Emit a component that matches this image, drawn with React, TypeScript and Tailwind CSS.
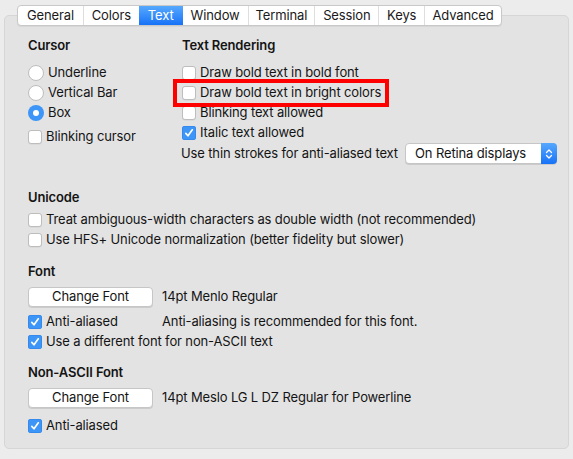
import React from 'react';

const tabs = ['General', 'Colors', 'Text', 'Window', 'Terminal', 'Session', 'Keys', 'Advanced'];
const tabWidths: Record<string, string> = {
  General: 'w-[65px]',
  Colors: 'w-[56px]',
  Text: 'w-[44px]',
  Window: 'w-[65px]',
  Terminal: 'w-[67px]',
  Session: 'w-[64px]',
  Keys: 'w-[46px]',
  Advanced: 'w-[77px]',
};

const Checkbox = ({ checked = false }: { checked?: boolean }) =>
  checked ? (
    <span className="flex h-[14px] w-[14px] shrink-0 items-center justify-center rounded-[3px] bg-[#3d95f8] shadow-[inset_0_0_0_0.5px_#2d7fe0]">
      <svg width="10" height="10" viewBox="0 0 10 10">
        <path d="M1.8 5.4 L4 7.8 L8.3 1.8" fill="none" stroke="white" strokeWidth="1.7" strokeLinecap="round" strokeLinejoin="round" />
      </svg>
    </span>
  ) : (
    <span className="h-[14px] w-[14px] shrink-0 rounded-[3px] border border-[#bdbdbd] bg-white shadow-[0_0.5px_0.5px_rgba(0,0,0,0.08)]" />
  );

const Radio = ({ checked = false }: { checked?: boolean }) =>
  checked ? (
    <span className="flex h-[16px] w-[16px] shrink-0 items-center justify-center rounded-full bg-[#3d95f8]">
      <span className="h-[6px] w-[6px] rounded-full bg-white" />
    </span>
  ) : (
    <span className="h-[16px] w-[16px] shrink-0 rounded-full border border-[#bdbdbd] bg-white" />
  );

const CheckRow = ({ label, checked }: { label: string; checked?: boolean }) => (
  <div className="flex h-[20px] items-center gap-[4px]">
    <Checkbox checked={checked} />
    <span>{label}</span>
  </div>
);

const Heading = ({ children, className = '' }: { children: React.ReactNode; className?: string }) => (
  <div className={`h-[17px] leading-[17px] font-semibold ${className}`}>{children}</div>
);

const Button = ({ label }: { label: string }) => (
  <div className="flex h-[20px] w-[125px] shrink-0 items-center justify-center rounded-[4px] border border-[#c6c6c6] bg-white shadow-[0_1px_0.5px_rgba(0,0,0,0.1)]">
    {label}
  </div>
);

export default function App() {
  return (
    <div
      className="h-[459px] w-[573px] overflow-hidden bg-[#ececec] pt-[5px] text-[13px] tracking-[-0.13px] text-[#141414]"
      style={{ fontFamily: 'Inter, "Liberation Sans", sans-serif' }}
    >
      {/* tab strip sits over the panel's top edge */}
      <div className="relative z-10 ml-[17px] flex h-[21px] w-[485px] overflow-hidden rounded-[4px] border border-[#c8c8c8] bg-white shadow-[0_1px_1px_rgba(0,0,0,0.06)]">
        {tabs.map((t, i) => (
          <div
            key={t}
            className={`flex h-full items-center justify-center ${tabWidths[t]} ${
              t === 'Text'
                ? 'bg-gradient-to-b from-[#56a8fd] to-[#1572f7] text-white'
                : 'text-[#1a1a1a]'
            } ${i > 0 && t !== 'Text' && tabs[i - 1] !== 'Text' ? 'border-l border-[#dedede]' : ''}`}
          >
            {t}
          </div>
        ))}
      </div>

      <div className="mx-[4px] mt-[-11px] h-[434px] rounded-[5px] border border-[#d6d6d6] bg-[#e3e3e3] pl-[23px] pt-[21px]">
        <div className="flex">
          {/* Cursor */}
          <div className="w-[154px]">
            <Heading>Cursor</Heading>
            <div className="mt-[9px]">
              {['Underline', 'Vertical Bar', 'Box'].map((l) => (
                <div key={l} className="flex h-[20px] items-center gap-[4px]">
                  <Radio checked={l === 'Box'} />
                  <span>{l}</span>
                </div>
              ))}
            </div>
            <div className="mt-[4px]">
              <CheckRow label="Blinking cursor" />
            </div>
          </div>

          {/* Text Rendering */}
          <div className="w-[375px]">
            <Heading>Text Rendering</Heading>
            <div className="mt-[9px]">
              <CheckRow label="Draw bold text in bold font" />
              <div className="relative">
                <CheckRow label="Draw bold text in bright colors" />
                <div className="pointer-events-none absolute left-[-9px] top-[-4px] h-[28px] w-[216px] border-[4px] border-[#ff0000]" />
              </div>
              <CheckRow label="Blinking text allowed" />
              <CheckRow label="Italic text allowed" checked />
              <div className="flex h-[21px] items-center">
                <span className="-ml-px">Use thin strokes for anti-aliased text</span>
                <div className="ml-auto flex h-[21px] w-[152px] items-center rounded-[4px] border border-[#c6c6c6] bg-white pl-[9px] shadow-[0_1px_0.5px_rgba(0,0,0,0.1)]">
                  <span className="flex-1">On Retina displays</span>
                  <span className="mr-[-1px] flex h-[21px] w-[16px] items-center justify-center rounded-r-[4px] bg-gradient-to-b from-[#56a8fd] to-[#1572f7]">
                    <svg width="8" height="12" viewBox="0 0 8 12">
                      <path d="M1.5 4.5 L4 2 L6.5 4.5 M1.5 7.5 L4 10 L6.5 7.5" fill="none" stroke="white" strokeWidth="1.3" strokeLinecap="round" strokeLinejoin="round" />
                    </svg>
                  </span>
                </div>
              </div>
            </div>
          </div>
        </div>

        {/* Unicode */}
        <Heading className="mt-[25px]">Unicode</Heading>
        <div className="mt-[4px]">
          <CheckRow label="Treat ambiguous-width characters as double width (not recommended)" />
          <CheckRow label="Use HFS+ Unicode normalization (better fidelity but slower)" />
        </div>

        {/* Font */}
        <Heading className="mt-[13px]">Font</Heading>
        <div className="mt-[7px] flex items-center">
          <Button label="Change Font" />
          <span className="ml-[9px]">14pt Menlo Regular</span>
        </div>
        <div className="mt-[5px] flex items-center">
          <div className="w-[134px]">
            <CheckRow label="Anti-aliased" checked />
          </div>
          <span>Anti-aliasing is recommended for this font.</span>
        </div>
        <CheckRow label="Use a different font for non-ASCII text" checked />

        {/* Non-ASCII Font */}
        <Heading className="mt-[12px]">Non-ASCII Font</Heading>
        <div className="mt-[7px] flex items-center">
          <Button label="Change Font" />
          <span className="ml-[9px]">14pt Meslo LG L DZ Regular for Powerline</span>
        </div>
        <div className="mt-[8px]">
          <CheckRow label="Anti-aliased" checked />
        </div>
      </div>
    </div>
  );
}
